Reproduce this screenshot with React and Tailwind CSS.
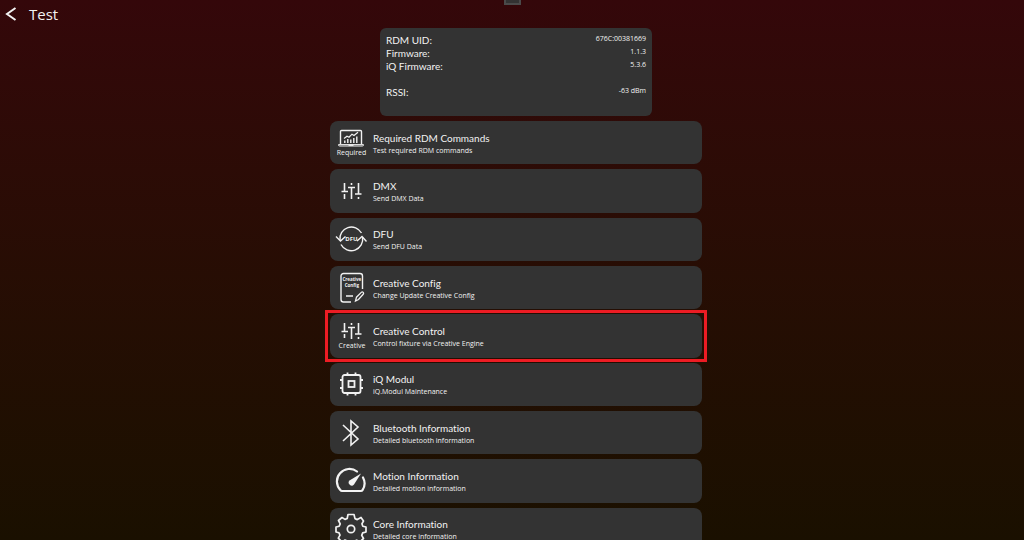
import React from "react";

function RequiredIcon() {
  return (
    <svg viewBox="0 0 32 32" className="h-8 w-8" fill="none" stroke="currentColor">
      <path d="M5.5 17V4.5a1 1 0 0 1 1-1h19a1 1 0 0 1 1 1V17" strokeWidth="1.4" />
      <path d="M3.5 17.6h25v.4q0 1-1.2 1H4.7q-1.2 0-1.2-1z" strokeWidth="1" />
      <path d="M13.5 18.2h5" strokeWidth="1.4" />
      <path d="M9 11.5l3-2.2 2 .9 3-3 2 1.2 4-3.2" strokeWidth="1.2" />
      <path d="M9.8 16v-2.5M12.8 16v-4M15.8 16v-3.5M18.8 16v-5M21.8 16V9.5" strokeWidth="1.4" />
      <text x="16.5" y="28" textAnchor="middle" fontSize="7" fill="currentColor" stroke="none" fontWeight="500">
        Required
      </text>
    </svg>
  );
}

function SlidersIcon() {
  return (
    <svg viewBox="0 0 32 32" className="h-8 w-8" fill="none" stroke="currentColor">
      <path
        d="M9.5 8v8M9.5 19v5M6.5 16.5H13M16.5 8v2M16.5 13v11M13 12.5h7M23.5 8v11M23.5 22v2M20 19h6.5"
        strokeWidth="1.6"
      />
    </svg>
  );
}

function DfuIcon() {
  return (
    <svg viewBox="0 0 32 32" className="h-8 w-8" fill="none" stroke="currentColor">
      <path d="M5 17A11.5 11.5 0 0 1 26.500 10M27.500 14A11.500 11.500 0 0 1 6 21.500" strokeWidth="1.4" />
      <path d="M1 13.500l4.500 4.500 5-4.500M22 18l5-4.500 4.500 5" strokeWidth="1.4" />
      <text x="16.500" y="18" textAnchor="middle" fontSize="6" fill="currentColor" stroke="none" fontWeight="700">
        DFU
      </text>
    </svg>
  );
}

function ConfigIcon() {
  return (
    <svg viewBox="0 0 32 32" className="h-8 w-8" fill="none" stroke="currentColor">
      <path d="M16 30H8.500A2.500 2.500 0 0 1 6 27.500V4a2.500 2.500 0 0 1 2.500-2.500H25A2.500 2.500 0 0 1 27.500 4v13" strokeWidth="1.4" />
      <path d="M11 24h7" strokeWidth="1.5" />
      <path d="M20.500 29l1-3.800 4.800-4.800a1.300 1.300 0 0 1 1.900 1.900l-4.700 5.200z" strokeWidth="1.3" />
      <text x="16.800" y="9" textAnchor="middle" fontSize="4.500" fill="currentColor" stroke="none" fontWeight="700">
        Creative
      </text>
      <text x="16.800" y="15" textAnchor="middle" fontSize="4.500" fill="currentColor" stroke="none" fontWeight="700">
        Config
      </text>
    </svg>
  );
}

function CreativeIcon() {
  return (
    <svg viewBox="0 0 32 32" className="h-8 w-8" fill="none" stroke="currentColor">
      <path
        d="M9.5 3v8M9.5 14v4M6.5 11.5H13M16.5 3v2M16.5 8v11M13 7.5h7M23.5 3v11M23.5 17v2M20 14h6.5"
        strokeWidth="1.6"
      />
      <text x="17" y="28" textAnchor="middle" fontSize="7" fill="currentColor" stroke="none">
        Creative
      </text>
    </svg>
  );
}

function ChipIcon() {
  return (
    <svg viewBox="0 0 32 32" className="h-8 w-8" fill="none" stroke="currentColor">
      <rect x="7.500" y="7" width="18" height="18" rx="2" strokeWidth="1.8" />
      <rect x="13.500" y="13" width="6" height="6" strokeWidth="1.8" />
      <path
        d="M12.500 7V4.500M20.500 7V4.500M12.500 25v2.500M20.500 25v2.500M7.500 12H5M7.500 20H5M25.500 12H28M25.500 20H28"
        strokeWidth="1.8"
      />
    </svg>
  );
}

function BluetoothIcon() {
  return (
    <svg viewBox="0 0 32 32" className="h-8 w-8" fill="none" stroke="currentColor">
      <path d="M8 8l15 14-7 6V4l7 6L8 24" strokeWidth="1.6" />
    </svg>
  );
}

function GaugeIcon() {
  return (
    <svg viewBox="0 0 32 32" className="h-8 w-8" fill="none" stroke="currentColor">
      <path
        d="M22 6.500A12.500 12.500 0 0 0 5.500 25.200Q6 26 7 26h19q1 0 1.500-.8a12.500 12.500 0 0 0 .5-12.700"
        strokeWidth="2.200"
        strokeLinecap="round"
      />
      <path d="M26 8.500L19 19.500a3 3 0 1 1-4.500-4z" fill="currentColor" stroke="none" />
    </svg>
  );
}

function GearIcon() {
  return (
    <svg viewBox="0 0 32 32" className="h-8 w-8" fill="none" stroke="currentColor">
      <path
        d="M13 1.500h6l1 4.100 2.300 1L26 4.500 28.500 8l-1.600 2.800.9 2.400 3.200.8v5l-3.300.9-1 2.400 1.800 3.200-3.800 3.500-3-1.800-2.400 1L18.500 31h-5l-1-2.900-2.500-1L7 28.900l-3.700-3.700L5 22.200l-1-2.400L1 19v-5l3.200-.8 1-2.400L3.500 7.500 7 4.500l3 1.900 2.200-.9z"
        strokeWidth="1.7"
        strokeLinejoin="round"
      />
      <circle cx="16" cy="16" r="3.700" strokeWidth="1.7" />
    </svg>
  );
}

const details = [
  { label: "RDM UID:", value: "676C:00381669" },
  { label: "Firmware:", value: "1.1.3" },
  { label: "iQ Firmware:", value: "5.3.6" },
  { label: "", value: "" },
  { label: "RSSI:", value: "-63 dBm" },
];

const tests = [
  { title: "Required RDM Commands", text: "Test required RDM commands", icon: RequiredIcon },
  { title: "DMX", text: "Send DMX Data", icon: SlidersIcon },
  { title: "DFU", text: "Send DFU Data", icon: DfuIcon },
  { title: "Creative Config", text: "Change Update Creative Config", icon: ConfigIcon },
  { title: "Creative Control", text: "Control fixture via Creative Engine", icon: CreativeIcon, highlighted: true },
  { title: "iQ Modul", text: "iQ.Modul Maintenance", icon: ChipIcon },
  { title: "Bluetooth Information", text: "Detailed bluetooth information", icon: BluetoothIcon },
  { title: "Motion Information", text: "Detailed motion information", icon: GaugeIcon },
  { title: "Core Information", text: "Detailed core information", icon: GearIcon },
];

function TestCard({ item }) {
  const Icon = item.icon;

  return (
    <button
      type="button"
      className="relative flex w-full items-center gap-[6px] rounded-lg bg-[#333333] pl-[5px] text-left"
    >
      <Icon />
      <span className="flex flex-col pt-[2px]">
        <span className="font-['Lato','Open_Sans',sans-serif] text-[10px] leading-[13px]">{item.title}</span>
        <span className="text-[7px] leading-[11px]">{item.text}</span>
      </span>
      {item.highlighted && (
        <span className="pointer-events-none absolute -inset-x-[5px] -inset-y-[4px] z-10 border-[3px] border-[#ed1c24]"></span>
      )}
    </button>
  );
}

function App() {
  return (
    <div className="relative h-screen overflow-hidden bg-linear-to-b from-[#34070a] to-[#1a1000] font-['Open_Sans','Noto_Sans',sans-serif] text-[#f2f2f2] [font-variant-ligatures:none]">
      {/* Window handle */}
      <div className="absolute top-0 left-1/2 h-[5px] w-[17px] -translate-x-2 border-2 border-t-0 border-[#4a4a4a] bg-[#333333]"></div>

      <header className="flex h-7 items-center gap-3 pl-[5px]">
        <button type="button" aria-label="Back">
          <svg viewBox="0 0 12 14" className="h-[14px] w-3" fill="none" stroke="currentColor">
            <path d="M10.500 1L2 7l8.500 6" strokeWidth="2" />
          </svg>
        </button>
        <h1 className="text-[15px] leading-5">Test</h1>
      </header>

      <main className="flex flex-col items-center gap-[5px] pl-2">
        {/* Device details */}
        <dl className="h-[88px] w-full max-w-[272px] rounded-md bg-[#333333] px-[6px] pt-[6px]">
          {details.map((row, i) => (
            <div key={i} className="flex h-[13px] justify-between">
              <dt className="font-['Lato','Open_Sans',sans-serif] text-[10px] leading-[13px]">{row.label}</dt>
              <dd className="text-[7px] leading-[10px]">{row.value}</dd>
            </div>
          ))}
        </dl>

        <div className="grid h-[430px] w-full max-w-[372px] shrink-0 auto-rows-fr gap-[5px]">
          {tests.map((item) => (
            <TestCard key={item.title} item={item} />
          ))}
        </div>
      </main>
    </div>
  );
}

export default App;
